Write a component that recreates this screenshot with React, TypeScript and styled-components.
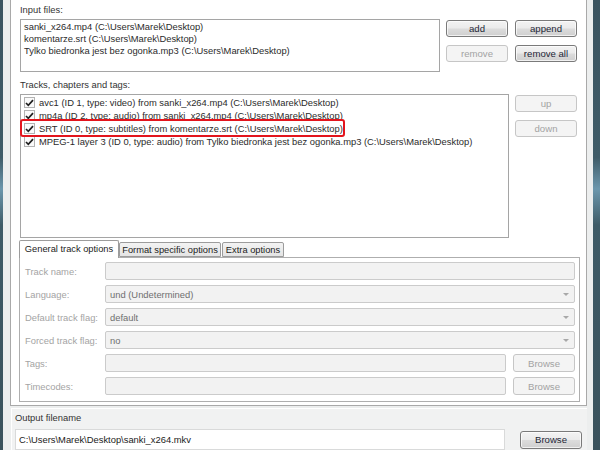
import React from "react";
import styled, { createGlobalStyle } from "styled-components";

const Global = createGlobalStyle`
  html, body { margin: 0; padding: 0; }
  body { font-family: "Liberation Sans", Arial, sans-serif; font-size: 9.4px; color: #2b2b2b; }
`;

const Frame = styled.div`
  width: 600px;
  height: 450px;
  overflow: hidden;
  box-sizing: border-box;
  padding: 0 7px 0 3px;
  background: linear-gradient(180deg, #3b5460 0%, #3f5c68 35%, #6c97ad 42%, #3e5b67 50%, #3a525c 100%);
`;

const Client = styled.div`
  height: 100%;
  box-sizing: border-box;
  background: #eceeee;
  padding: 0 6px 0 7px;
  display: flex;
  flex-direction: column;
`;

const Page = styled.div`
  height: 410px;
  box-sizing: border-box;
  background: #fff;
  border: 1px solid #a9a9a9;
  border-top: none;
  padding: 4px 9px 0 9px;
  display: flex;
  flex-direction: column;
`;

const Caption = styled.div<{ $top?: number }>`
  height: 12px;
  line-height: 12px;
  margin-top: ${(p) => p.$top ?? 0}px;
  margin-bottom: 3px;
  color: #333;
  white-space: nowrap;
`;

const Row = styled.div`
  display: flex;
  gap: 6px;
`;

const ListBox = styled.div<{ $w: number; $h: number }>`
  position: relative;
  width: ${(p) => p.$w}px;
  height: ${(p) => p.$h}px;
  box-sizing: border-box;
  border: 1px solid #a5a5a5;
  background: #fff;
  padding: 1px 3px;
`;

const FileLine = styled.div`
  height: 12px;
  line-height: 12px;
  white-space: nowrap;
`;

const ButtonGrid = styled.div<{ $cols: number }>`
  display: grid;
  grid-template-columns: repeat(${(p) => p.$cols}, 62px);
  column-gap: 7px;
  row-gap: 8px;
  align-content: start;
  padding-top: 1px;
`;

const Btn = styled.div<{ $disabled?: boolean; $h?: number }>`
  height: ${(p) => p.$h ?? 17}px;
  box-sizing: border-box;
  border-radius: 3px;
  display: flex;
  align-items: center;
  justify-content: center;
  white-space: nowrap;
  font-size: 9.6px;
  border: 1px solid ${(p) => (p.$disabled ? "#c6c6c6" : "#7a7a7a")};
  background: ${(p) =>
    p.$disabled
      ? "#f4f4f4"
      : "linear-gradient(180deg, #f3f3f3 0%, #ebebeb 48%, #dcdcdc 52%, #cfcfcf 100%)"};
  color: ${(p) => (p.$disabled ? "#a3a3a3" : "#1d2636")};
  box-shadow: ${(p) => (p.$disabled ? "none" : "inset 0 0 0 1px rgba(255,255,255,0.7)")};
`;

const TrackRow = styled.div`
  height: 13px;
  display: flex;
  align-items: center;
  gap: 4px;
  white-space: nowrap;
`;

const Check = styled.span`
  width: 11px;
  height: 11px;
  box-sizing: border-box;
  border: 1px solid #b3b3b3;
  background: #fafafa;
  display: flex;
  align-items: center;
  justify-content: center;
  flex: none;
`;

const Highlight = styled.div`
  position: absolute;
  left: -1px;
  top: 24px;
  width: 325px;
  height: 18px;
  box-sizing: border-box;
  border: 2px solid #e3151d;
  border-radius: 3px;
  pointer-events: none;
`;

const Tabs = styled.div`
  width: 561px;
  margin: 2px 0 0 -1px;
  display: flex;
  flex-direction: column;
`;

const TabBar = styled.div`
  display: flex;
  align-items: flex-end;
  height: 17px;
  position: relative;
  z-index: 1;
`;

const Tab = styled.div<{ $active?: boolean; $w: number }>`
  width: ${(p) => p.$w}px;
  height: ${(p) => (p.$active ? 18 : 15)}px;
  box-sizing: border-box;
  border: 1px solid #9c9c9c;
  border-bottom: ${(p) => (p.$active ? "none" : "1px solid #9c9c9c")};
  border-radius: 2px 2px 0 0;
  margin-right: ${(p) => (p.$active ? 0 : 1)}px;
  margin-bottom: ${(p) => (p.$active ? -1 : 0)}px;
  background: ${(p) => (p.$active ? "#fff" : "linear-gradient(180deg, #f3f3f3, #e4e4e4)")};
  display: flex;
  align-items: center;
  justify-content: center;
  padding-bottom: ${(p) => (p.$active ? 2 : 0)}px;
  color: #222;
  font-size: 9.3px;
  white-space: nowrap;
`;

const TabPanel = styled.div`
  height: 145px;
  box-sizing: border-box;
  border: 1px solid #aeaeae;
  padding: 4px 4px 0 5px;
  display: flex;
  flex-direction: column;
  gap: 5px;
`;

const FormRow = styled.div`
  display: flex;
  align-items: center;
  height: 18px;
`;

const FieldLabel = styled.div`
  width: 80px;
  color: #a4a4a4;
  flex: none;
  white-space: nowrap;
`;

const Field = styled.div`
  flex: 1;
  height: 18px;
  box-sizing: border-box;
  border: 1px solid #cbcbcb;
  border-radius: 2px;
  background: #f2f2f2;
  color: #6f6f6f;
  display: flex;
  align-items: center;
  justify-content: space-between;
  padding: 0 5px 0 4px;
`;

const Arrow = styled.span`
  width: 0;
  height: 0;
  border-left: 3px solid transparent;
  border-right: 3px solid transparent;
  border-top: 3px solid #a8a8a8;
`;

const Side = styled.div`
  width: 62px;
  margin-left: 7px;
  flex: none;
`;

const Output = styled.div`
  flex: 1;
  margin: 2px 0 0 1px;
  border-left: 1px solid #fff;
  border-top: 1px solid #fff;
  background: #f1f2f2;
  padding: 3px 0 0 3px;
  display: flex;
  flex-direction: column;
`;

const OutputRow = styled.div`
  display: flex;
  align-items: center;
  gap: 8px;
  margin-top: 2px;
`;

const OutputField = styled.div`
  width: 490px;
  height: 21px;
  box-sizing: border-box;
  border: 1px solid #d9dada;
  background: #fff;
  display: flex;
  align-items: center;
  padding-left: 3px;
  color: #222;
`;

const CheckMark = () => (
  <svg width="9" height="8" viewBox="0 0 9 8">
    <path d="M1 4 L3.3 6.3 L8 1.2" fill="none" stroke="#1f1f1f" strokeWidth="1.7" />
  </svg>
);

const files = [
  "sanki_x264.mp4 (C:\\Users\\Marek\\Desktop)",
  "komentarze.srt (C:\\Users\\Marek\\Desktop)",
  "Tylko biedronka jest bez ogonka.mp3 (C:\\Users\\Marek\\Desktop)",
];

const tracks = [
  "avc1 (ID 1, type: video) from sanki_x264.mp4 (C:\\Users\\Marek\\Desktop)",
  "mp4a (ID 2, type: audio) from sanki_x264.mp4 (C:\\Users\\Marek\\Desktop)",
  "SRT (ID 0, type: subtitles) from komentarze.srt (C:\\Users\\Marek\\Desktop)",
  "MPEG-1 layer 3 (ID 0, type: audio) from Tylko biedronka jest bez ogonka.mp3 (C:\\Users\\Marek\\Desktop)",
];

const App = () => {
  return (
    <>
      <Global />
      <Frame>
        <Client>
          <Page>
            <Caption>Input files:</Caption>
            <Row>
              <ListBox $w={420} $h={53}>
                {files.map((f) => (
                  <FileLine key={f}>{f}</FileLine>
                ))}
              </ListBox>
              <ButtonGrid $cols={2}>
                <Btn>add</Btn>
                <Btn>append</Btn>
                <Btn $disabled>remove</Btn>
                <Btn>remove all</Btn>
              </ButtonGrid>
            </Row>
            <Caption $top={7}>Tracks, chapters and tags:</Caption>
            <Row>
              <ListBox $w={489} $h={144}>
                {tracks.map((t) => (
                  <TrackRow key={t}>
                    <Check>
                      <CheckMark />
                    </Check>
                    {t}
                  </TrackRow>
                ))}
                <Highlight />
              </ListBox>
              <ButtonGrid $cols={1}>
                <Btn $disabled>up</Btn>
                <Btn $disabled>down</Btn>
              </ButtonGrid>
            </Row>
            <Tabs>
              <TabBar>
                <Tab $active $w={100}>General track options</Tab>
                <Tab $w={102}>Format specific options</Tab>
                <Tab $w={62}>Extra options</Tab>
              </TabBar>
              <TabPanel>
                <FormRow>
                  <FieldLabel>Track name:</FieldLabel>
                  <Field />
                </FormRow>
                <FormRow>
                  <FieldLabel>Language:</FieldLabel>
                  <Field>
                    und (Undetermined)
                    <Arrow />
                  </Field>
                </FormRow>
                <FormRow>
                  <FieldLabel>Default track flag:</FieldLabel>
                  <Field>
                    default
                    <Arrow />
                  </Field>
                </FormRow>
                <FormRow>
                  <FieldLabel>Forced track flag:</FieldLabel>
                  <Field>
                    no
                    <Arrow />
                  </Field>
                </FormRow>
                <FormRow>
                  <FieldLabel>Tags:</FieldLabel>
                  <Field />
                  <Side>
                    <Btn $disabled $h={18}>Browse</Btn>
                  </Side>
                </FormRow>
                <FormRow>
                  <FieldLabel>Timecodes:</FieldLabel>
                  <Field />
                  <Side>
                    <Btn $disabled $h={18}>Browse</Btn>
                  </Side>
                </FormRow>
              </TabPanel>
            </Tabs>
          </Page>
          <Output>
            <Caption>Output filename</Caption>
            <OutputRow>
              <OutputField>C:\Users\Marek\Desktop\sanki_x264.mkv</OutputField>
              <Side>
                <Btn $h={18}>Browse</Btn>
              </Side>
            </OutputRow>
          </Output>
        </Client>
      </Frame>
    </>
  );
};

export default App;
